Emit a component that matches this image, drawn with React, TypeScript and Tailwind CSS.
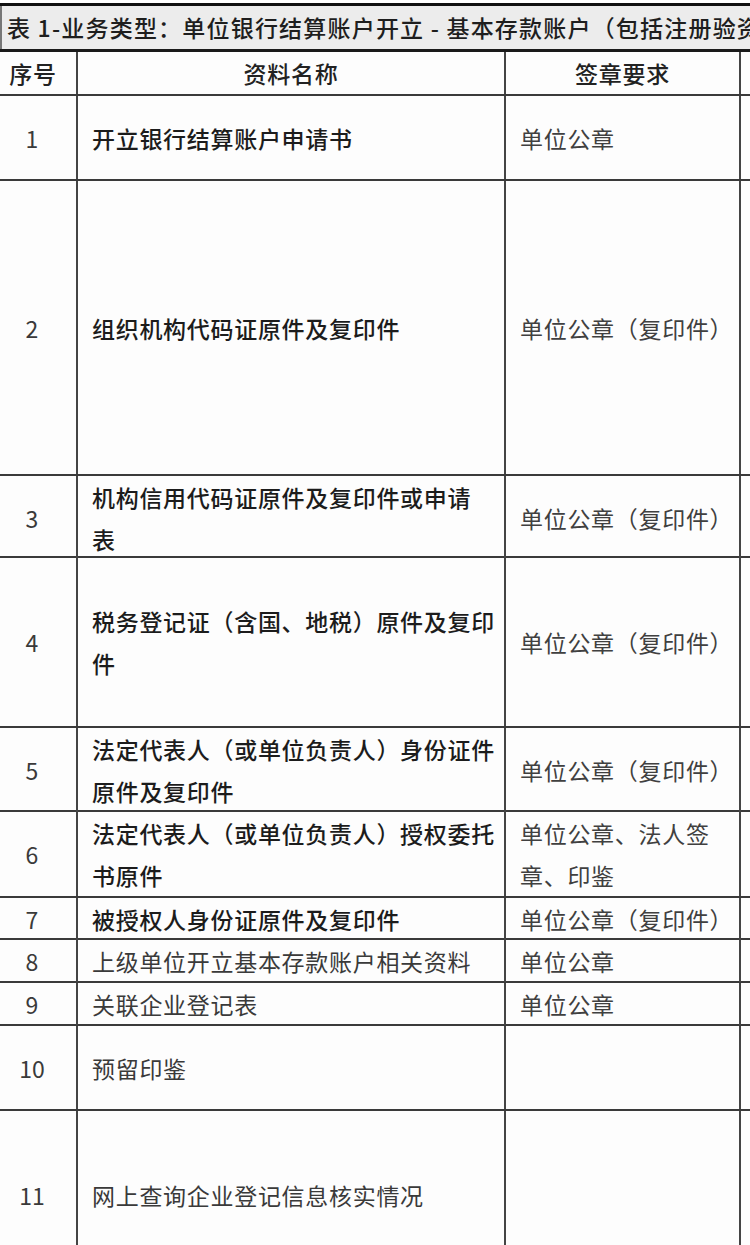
import React from "react";

type Row = {
  no: string;
  name: string[];
  seal: string[];
  h: string;
  bold: boolean;
};

const rows: Row[] = [
  { no: "1", name: ["开立银行结算账户申请书"], seal: ["单位公章"], h: "h-[85px]", bold: true },
  { no: "2", name: ["组织机构代码证原件及复印件"], seal: ["单位公章（复印件）"], h: "h-[295px]", bold: true },
  { no: "3", name: ["机构信用代码证原件及复印件或申请", "表"], seal: ["单位公章（复印件）"], h: "h-[82px]", bold: true },
  { no: "4", name: ["税务登记证（含国、地税）原件及复印", "件"], seal: ["单位公章（复印件）"], h: "h-[170px]", bold: true },
  { no: "5", name: ["法定代表人（或单位负责人）身份证件", "原件及复印件"], seal: ["单位公章（复印件）"], h: "h-[84px]", bold: true },
  { no: "6", name: ["法定代表人（或单位负责人）授权委托", "书原件"], seal: ["单位公章、法人签", "章、印鉴"], h: "h-[86px]", bold: true },
  { no: "7", name: ["被授权人身份证原件及复印件"], seal: ["单位公章（复印件）"], h: "h-[42px]", bold: true },
  { no: "8", name: ["上级单位开立基本存款账户相关资料"], seal: ["单位公章"], h: "h-[43px]", bold: false },
  { no: "9", name: ["关联企业登记表"], seal: ["单位公章"], h: "h-[43px]", bold: false },
  { no: "10", name: ["预留印鉴"], seal: [], h: "h-[85px]", bold: false },
  { no: "11", name: ["网上查询企业登记信息核实情况"], seal: [], h: "h-[170px]", bold: false },
];

function Lines({ lines }: { lines: string[] }) {
  return (
    <div className="flex flex-col">
      {lines.map((l, i) => (
        <span key={i} className="block whitespace-nowrap">
          {l}
        </span>
      ))}
    </div>
  );
}

export default function App() {
  return (
    <div
      className="w-[750px] h-[1245px] overflow-hidden bg-[#fdfdfd] text-[23px] tracking-[0.7px]"
      style={{ fontFamily: '"Noto Sans CJK SC", "Noto Sans", sans-serif' }}
    >
      <div className="h-[3px] bg-white" />
      <div className="h-[3px] bg-[#111]" />
      <div className="h-[43px] bg-[#ececec] flex items-center pl-[5px] whitespace-nowrap overflow-hidden text-[#1e1e1e] font-medium tracking-[1.2px] border-l-2 border-[#777]">
        表 1-业务类型：单位银行结算账户开立 - 基本存款账户（包括注册验资
      </div>
      <div className="h-[3px] bg-[#1a1a1a]" />

      {/* header */}
      <div className="grid grid-cols-[78px_428px_235px_1fr] h-[44px] border-b-2 border-[#3a3a3a] text-[#222] font-medium">
        <div className="border-r-2 border-[#444] flex items-center justify-center pr-[10px]">序号</div>
        <div className="border-r-2 border-[#444] flex items-center justify-center">资料名称</div>
        <div className="border-r-2 border-[#444] flex items-center justify-center">签章要求</div>
        <div />
      </div>

      {rows.map((r) => (
        <div
          key={r.no}
          className={`grid grid-cols-[78px_428px_235px_1fr] ${r.h} border-b-2 border-[#3a3a3a] leading-[42px]`}
        >
          <div className="border-r-2 border-[#444] flex items-center justify-center pr-[12px] text-[#3a3a3a] tracking-normal">
            {r.no}
          </div>
          <div
            className={`border-r-2 border-[#444] flex items-center pl-[14px] ${
              r.bold ? "font-medium text-[#1c1c1c]" : "text-[#3a3a3a]"
            }`}
          >
            <Lines lines={r.name} />
          </div>
          <div className="border-r-2 border-[#444] flex items-center pl-[14px] text-[#404040]">
            <Lines lines={r.seal} />
          </div>
          <div />
        </div>
      ))}
    </div>
  );
}
